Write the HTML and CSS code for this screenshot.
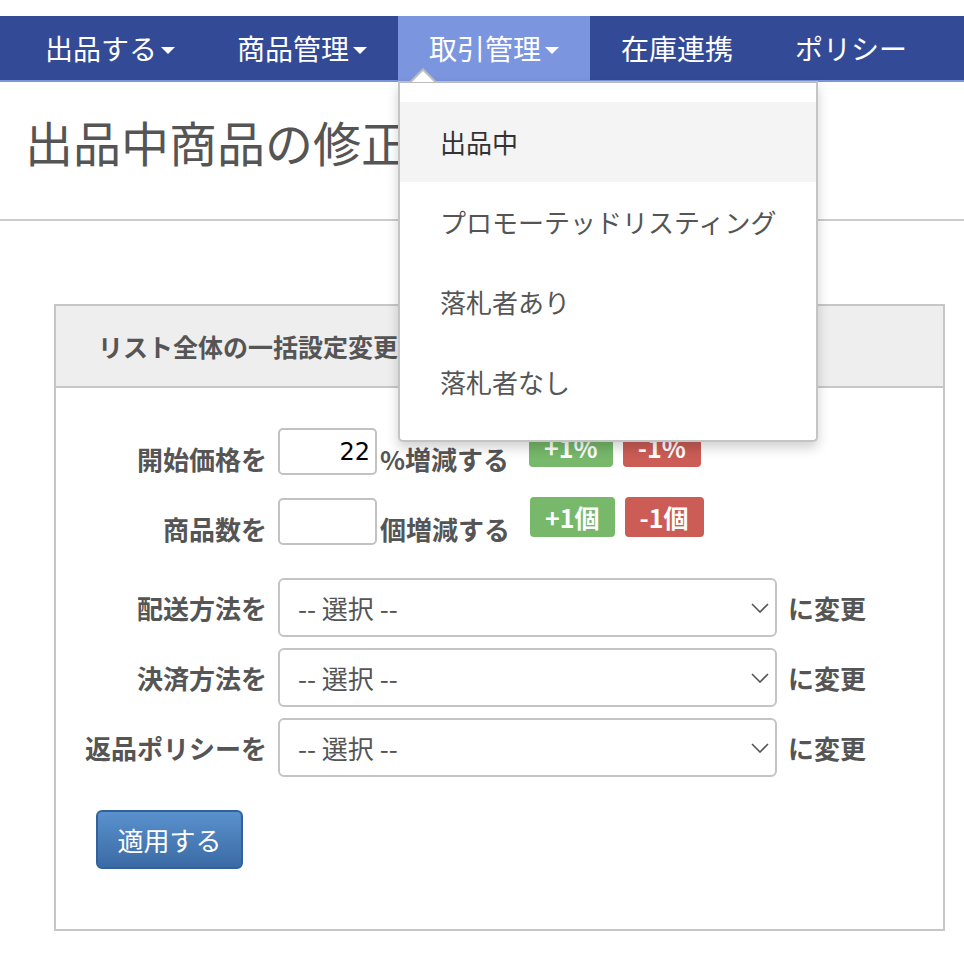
FILE: index.html
```html
<!DOCTYPE html>
<html lang="ja">
<head>
    <meta charset="UTF-8">
    <meta name="viewport" content="width=device-width, initial-scale=1.0">
    <title>出品中商品の修正</title>
    <link rel="stylesheet" href="styles.css">
</head>
<body>
    <nav class="navbar">
        <ul class="nav">
            <li class="nav-item"><a class="nav-link" href="#">出品する<span class="caret"></span></a></li>
            <li class="nav-item"><a class="nav-link" href="#">商品管理<span class="caret"></span></a></li>
            <li class="nav-item open">
                <a class="nav-link" href="#">取引管理<span class="caret"></span></a>
                <ul class="dropdown-menu">
                    <li class="active"><a href="#">出品中</a></li>
                    <li><a href="#">プロモーテッドリスティング</a></li>
                    <li><a href="#">落札者あり</a></li>
                    <li><a href="#">落札者なし</a></li>
                </ul>
            </li>
            <li class="nav-item"><a class="nav-link" href="#">在庫連携</a></li>
            <li class="nav-item"><a class="nav-link" href="#">ポリシー</a></li>
        </ul>
    </nav>

    <div class="page-header">
        <h1>出品中商品の修正</h1>
    </div>

    <div class="panel">
        <div class="panel-heading">リスト全体の一括設定変更</div>
        <div class="panel-body">
            <div class="form-row row-num">
                <label class="label">開始価格を</label>
                <input class="num-input" type="text" value="22">
                <span class="unit">%増減する</span>
                <button class="btn btn-plus">+1%</button>
                <button class="btn btn-minus">-1%</button>
            </div>
            <div class="form-row row-num last-num">
                <label class="label">商品数を</label>
                <input class="num-input" type="text" value="">
                <span class="unit">個増減する</span>
                <button class="btn btn-plus">+1個</button>
                <button class="btn btn-minus">-1個</button>
            </div>

            <div class="form-row row-select">
                <label class="label">配送方法を</label>
                <div class="select-wrap">
                    <select class="select"><option>-- 選択 --</option></select>
                    <svg class="chevron" width="18" height="10" viewBox="0 0 18 10"><polyline points="1,1 9,9 17,1" fill="none" stroke="#555" stroke-width="1.6"/></svg>
                </div>
                <span class="suffix">に変更</span>
            </div>
            <div class="form-row row-select">
                <label class="label">決済方法を</label>
                <div class="select-wrap">
                    <select class="select"><option>-- 選択 --</option></select>
                    <svg class="chevron" width="18" height="10" viewBox="0 0 18 10"><polyline points="1,1 9,9 17,1" fill="none" stroke="#555" stroke-width="1.6"/></svg>
                </div>
                <span class="suffix">に変更</span>
            </div>
            <div class="form-row row-select">
                <label class="label">返品ポリシーを</label>
                <div class="select-wrap">
                    <select class="select"><option>-- 選択 --</option></select>
                    <svg class="chevron" width="18" height="10" viewBox="0 0 18 10"><polyline points="1,1 9,9 17,1" fill="none" stroke="#555" stroke-width="1.6"/></svg>
                </div>
                <span class="suffix">に変更</span>
            </div>

            <button class="btn-apply">適用する</button>
        </div>
    </div>
</body>
</html>
```

FILE: styles.css
```css
body{margin:0;padding:0;background:#fff;color:#555;font-family:"Noto Sans CJK JP","Noto Sans",sans-serif}
a{text-decoration:none}

.navbar{margin-top:16px;background:#334a96;border-bottom:2px solid #7b94dd}
.nav{display:flex;list-style:none;margin:0;padding:0 0 0 14px;height:64px}
.nav-item{position:relative}
.nav-link{display:flex;align-items:center;height:64px;padding:0 31px;color:#fff;font-size:28px;line-height:1}
.nav-item.open .nav-link{background:#7b96de}
.caret{display:inline-block;margin:4px 0 0 4px;border-top:7px solid #fff;border-left:7px solid transparent;border-right:7px solid transparent}

.dropdown-menu{position:absolute;top:65px;left:0;z-index:10;width:420px;box-sizing:border-box;margin:0;padding:19px 0 18px;list-style:none;background:#fff;border:2px solid #c4c4c4;border-top-color:#bdbdbd;border-radius:0 0 5px 5px;box-shadow:0 6px 12px rgba(0,0,0,0.18)}
.dropdown-menu::before{content:"";position:absolute;top:-15px;left:10px;border-left:13px solid transparent;border-right:13px solid transparent;border-bottom:13px solid #bdbdbd}
.dropdown-menu::after{content:"";position:absolute;top:-12px;left:12px;border-left:11px solid transparent;border-right:11px solid transparent;border-bottom:11px solid #fff}
.dropdown-menu a{display:block;height:80px;line-height:80px;padding-left:40px;font-size:26px;color:#555}
.dropdown-menu .active a{background:#f4f4f4;color:#333}

.page-header{padding:35px 25px 54px;border-bottom:2px solid #ccc}
.page-header h1{margin:0;font-size:48px;font-weight:normal;line-height:1;color:#555}

.panel{width:891px;box-sizing:border-box;margin:83px 0 0 54px;border:2px solid #c6c6c6}
.panel-heading{height:80px;display:flex;align-items:center;padding-left:42px;background:#eee;border-bottom:2px solid #c6c6c6;font-size:25px;font-weight:bold;color:#555}
.panel-body{padding:40px 0 60px}

.form-row{display:flex}
.label{width:211px;margin-right:11px;text-align:right;font-size:26px;font-weight:bold;line-height:1;color:#555}
.row-num{align-items:flex-start;height:47px;margin-bottom:23px}
.row-num.last-num{margin-bottom:33px}
.row-num .label,.row-num .unit{margin-top:18px}
.num-input{width:99px;height:47px;box-sizing:border-box;padding:0 5px;border:2px solid #c2c2c2;border-radius:5px;text-align:right;font-family:"DejaVu Sans",sans-serif;font-size:24px;color:#000}
.unit{margin-left:3px;font-size:26px;font-weight:bold;line-height:1}
.btn{height:40px;margin:-1px 0 0 0;padding:0 15px;border:none;border-radius:4px;color:#fff;font-family:inherit;font-size:25px;font-weight:bold;line-height:1}
.btn-plus{margin-left:20px;background:#77b86b}
.btn-minus{margin-left:10px;background:#cb5c56}

.row-select{align-items:center;margin-bottom:11px}
.select-wrap{position:relative;width:499px}
.select{width:100%;height:59px;padding:0 18px;-webkit-appearance:none;appearance:none;background:#fff;border:2px solid #c4c4c4;border-radius:6px;font-family:inherit;font-size:26px;color:#555}
.chevron{position:absolute;right:8px;top:25px;pointer-events:none}
.suffix{margin-left:11px;font-size:26px;font-weight:bold;line-height:1}

.btn-apply{display:block;width:147px;height:59px;margin:33px 0 0 40px;border:2px solid #33619b;border-radius:6px;background:linear-gradient(#5991cd,#3b6ba5);color:#fff;font-family:inherit;font-size:26px}
```
